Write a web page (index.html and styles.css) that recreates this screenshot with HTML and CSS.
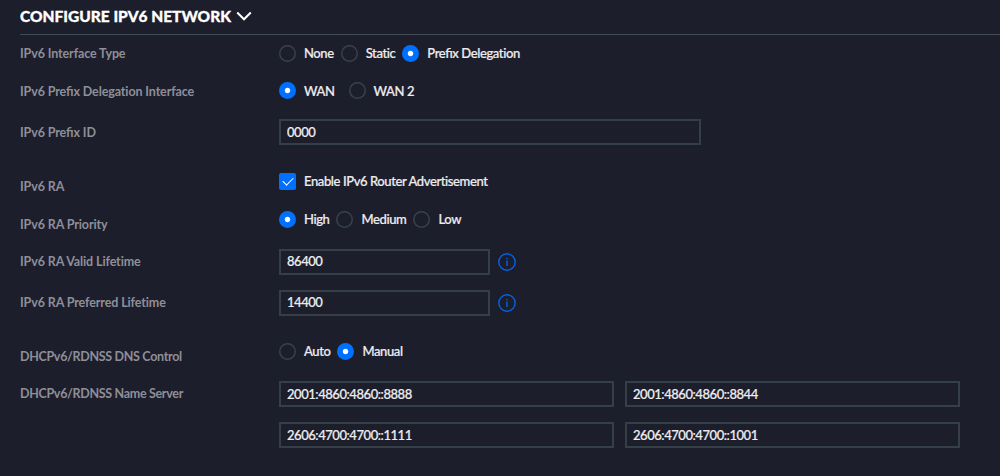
FILE: index.html
```html
<!DOCTYPE html>
<html lang="en">
<head>
    <meta charset="UTF-8">
    <meta name="viewport" content="width=device-width, initial-scale=1.0">
    <title>Configure IPv6 Network</title>
    <link rel="stylesheet" href="styles.css">
</head>
<body>
    <form class="network">
        <h2 class="header">
            <span class="header-text">CONFIGURE IPV6 NETWORK</span>
            <svg class="chevron" viewBox="0 0 16 10"><path d="M1.2 1.5 L8 8.3 L14.8 1.5"/></svg>
        </h2>

        <div class="row">
            <div class="label">IPv6 Interface Type</div>
            <div class="options">
                <label class="option"><input type="radio" name="type"><span>None</span></label>
                <label class="option"><input type="radio" name="type"><span>Static</span></label>
                <label class="option"><input type="radio" name="type" checked><span><span class="liga">Prefix</span> Delegation</span></label>
            </div>
        </div>
        <div class="row">
            <div class="label">IPv6 <span class="liga">Prefix</span> Delegation Interface</div>
            <div class="options options-wide">
                <label class="option"><input type="radio" name="wan" checked><span>WAN</span></label>
                <label class="option"><input type="radio" name="wan"><span>WAN 2</span></label>
            </div>
        </div>
        <div class="row row-tall">
            <div class="label">IPv6 <span class="liga">Prefix</span> ID</div>
            <input class="field field-medium" type="text" value="0000">
        </div>

        <div class="row row-group">
            <div class="label">IPv6 RA</div>
            <div class="options options-raised">
                <label class="option"><input type="checkbox" checked><span class="check-text">Enable IPv6 Router Advertisement</span></label>
            </div>
        </div>
        <div class="row">
            <div class="label">IPv6 RA Priority</div>
            <div class="options options-raised">
                <label class="option"><input type="radio" name="priority" checked><span>High</span></label>
                <label class="option"><input type="radio" name="priority"><span>Medium</span></label>
                <label class="option"><input type="radio" name="priority"><span>Low</span></label>
            </div>
        </div>
        <div class="row">
            <div class="label">IPv6 RA Valid Lifetime</div>
            <div class="with-info">
                <input class="field field-small" type="text" value="86400">
                <svg class="info" viewBox="0 0 18 18"><circle cx="9" cy="9" r="8.2"/><path d="M9 7.6 V13 M9 5 V6.2"/></svg>
            </div>
        </div>
        <div class="row row-tall">
            <div class="label">IPv6 RA Preferred Lifetime</div>
            <div class="with-info">
                <input class="field field-small" type="text" value="14400">
                <svg class="info" viewBox="0 0 18 18"><circle cx="9" cy="9" r="8.2"/><path d="M9 7.6 V13 M9 5 V6.2"/></svg>
            </div>
        </div>

        <div class="row row-group row-dns">
            <div class="label label-dns">DHCPv6/RDNSS DNS Control</div>
            <div class="options options-raised">
                <label class="option"><input type="radio" name="dns"><span>Auto</span></label>
                <label class="option"><input type="radio" name="dns" checked><span>Manual</span></label>
            </div>
        </div>
        <div class="row row-servers">
            <div class="label label-dns">DHCPv6/RDNSS Name Server</div>
            <div class="servers">
                <input class="field" type="text" value="2001:4860:4860::8888">
                <input class="field" type="text" value="2001:4860:4860::8844">
                <input class="field" type="text" value="2606:4700:4700::1111">
                <input class="field" type="text" value="2606:4700:4700::1001">
            </div>
        </div>
    </form>
</body>
</html>
```
FILE: styles.css
```css
* {
    box-sizing: border-box;
}

body {
    margin: 0;
    background: #1d1e2c;
    color: #ededf0;
    font-family: Lato, "Liberation Sans", sans-serif;
    font-size: 13px;
    overflow: hidden;
}

.network {
    padding-left: 20px;
    height: 476px;
}

.header {
    display: flex;
    align-items: center;
    gap: 5px;
    height: 35px;
    margin: 0;
    padding-bottom: 2px;
    border-bottom: 1px solid #414b52;
    color: #fff;
    font-size: 15.5px;
    font-weight: 900;
    -webkit-text-stroke: 0.3px #fff;
}

.chevron {
    width: 16px;
    height: 10px;
    fill: none;
    stroke: #fff;
    stroke-width: 2;
}

.row {
    display: grid;
    grid-template-columns: 259px 1fr;
    align-items: center;
    height: 37.5px;
}

.row-tall {
    height: 44px;
}

.row-group {
    margin-top: 14px;
}

.row-dns {
    margin-top: 13px;
    margin-bottom: 1px;
}

.row-servers {
    height: auto;
    align-items: start;
    padding-top: 5px;
}

.row-servers .label {
    line-height: 26px;
}

.label {
    color: #8e8f98;
    font-weight: 700;
    font-size: 12.5px;
    letter-spacing: -0.12px;
}

.label-dns {
    letter-spacing: -0.32px;
}

.liga {
    font-feature-settings: "liga";
}

.options {
    display: flex;
    gap: 7px;
    position: relative;
    top: -0.5px;
}

.options-wide {
    gap: 14px;
}

.options-raised {
    margin-bottom: 9px;
}

.option {
    display: flex;
    align-items: center;
    gap: 8px;
    font-weight: 500;
    letter-spacing: -0.4px;
    -webkit-text-stroke: 0.2px;
}

.check-text {
    padding-bottom: 2px;
}

.option input {
    appearance: none;
    flex: none;
    width: 17px;
    height: 17px;
    margin: 0;
    box-shadow: inset 0 0 0 1.5px #374249;
}

.option input[type="radio"] {
    border-radius: 50%;
}

.option input[type="radio"]:checked {
    box-shadow: none;
    background: radial-gradient(circle, #fff 2.2px, #0070ff 3.2px);
}

.option input[type="checkbox"] {
    border-radius: 2px;
    background: #0070ff;
    box-shadow: none;
    display: grid;
    place-items: center;
}

.option input[type="checkbox"]::before {
    content: "";
    width: 9px;
    height: 5px;
    margin-bottom: 3px;
    border: solid #fff;
    border-width: 0 0 1.5px 1.5px;
    transform: rotate(-45deg);
}

.field {
    width: 100%;
    height: 26px;
    padding: 0 6px 1px;
    border: 2px solid #343f46;
    background: transparent;
    color: #ededf0;
    font: 500 13px Lato, "Liberation Sans", sans-serif;
    letter-spacing: -0.45px;
    outline: none;
    -webkit-text-stroke: 0.2px;
}

.field-medium {
    width: 422px;
}

.field-small {
    width: 211px;
}

.with-info {
    display: flex;
    align-items: center;
    gap: 8px;
}

.info {
    width: 18px;
    height: 18px;
    fill: none;
    stroke: #0063e6;
    stroke-width: 1.4;
}

.servers {
    display: grid;
    grid-template-columns: 335px 335px;
    gap: 15px 11px;
}
```
